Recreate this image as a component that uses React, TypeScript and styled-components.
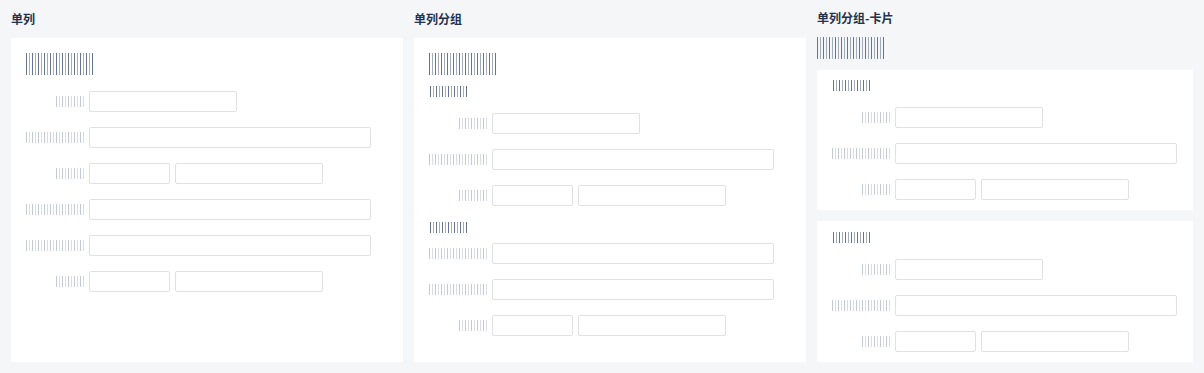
import React from "react";
import styled, { createGlobalStyle } from "styled-components";

type FieldKind = "short" | "wide" | "pair";

interface IRow {
  label: "short" | "long";
  field: FieldKind;
}

const GlobalStyle = createGlobalStyle`
  html, body {
    margin: 0;
    padding: 0;
    background: #f5f6f8;
  }
  body {
    font-family: "Noto Sans CJK SC", "Noto Sans", sans-serif;
  }
`;

const groupA: IRow[] = [
  { label: "short", field: "short" },
  { label: "long", field: "wide" },
  { label: "short", field: "pair" },
];

const singleRows: IRow[] = [
  { label: "short", field: "short" },
  { label: "long", field: "wide" },
  { label: "short", field: "pair" },
  { label: "long", field: "wide" },
  { label: "long", field: "wide" },
  { label: "short", field: "pair" },
];

const groupB: IRow[] = [
  { label: "long", field: "wide" },
  { label: "long", field: "wide" },
  { label: "short", field: "pair" },
];

const FormRows = ({ rows }: { rows: IRow[] }) => (
  <RowList>
    {rows.map((row, i) => (
      <Row key={i}>
        <LabelCell>
          <LabelBars size={row.label} />
        </LabelCell>
        {row.field === "pair" ? (
          <>
            <Input width={81} />
            <Input width={148} />
          </>
        ) : (
          <Input width={row.field === "wide" ? 282 : 148} />
        )}
      </Row>
    ))}
  </RowList>
);

export default function App() {
  return (
    <>
      <GlobalStyle />
      <Page>
        <Column>
          <Heading>单列</Heading>
          <Panel>
            <TitleBars />
            <FormRows rows={singleRows} />
          </Panel>
        </Column>

        <Column>
          <Heading>单列分组</Heading>
          <Panel>
            <TitleBars />
            <SubTitleBars top={11} bottom={16} />
            <FormRows rows={groupA} />
            <SubTitleBars top={16} bottom={10} />
            <FormRows rows={groupB} />
          </Panel>
        </Column>

        <Column>
          <Heading short>单列分组-卡片</Heading>
          <TitleBars />
          <CardStack>
            <Card>
              <SubTitleBars top={0} bottom={16} />
              <FormRows rows={groupA} />
            </Card>
            <Card>
              <SubTitleBars top={1} bottom={16} />
              <FormRows rows={groupA} />
            </Card>
          </CardStack>
        </Column>
      </Page>
    </>
  );
}

const Page = styled.div`
  box-sizing: border-box;
  height: 373px;
  padding: 0 11px 11px;
  display: grid;
  grid-template-columns: 392px 392px 376px;
  column-gap: 11px;
`;

const Column = styled.div`
  display: flex;
  flex-direction: column;
  min-height: 0;
`;

const Heading = styled.div<{ short?: boolean }>`
  height: ${(p) => (p.short ? 37 : 38)}px;
  flex: none;
  display: flex;
  align-items: center;
  font-size: 12px;
  font-weight: 700;
  color: #24324d;
  line-height: 1;
  padding-bottom: 1px;
  box-sizing: border-box;
`;

const Panel = styled.div`
  flex: 1;
  background: #ffffff;
  padding: 15px;
  display: flex;
  flex-direction: column;
  align-items: flex-start;
`;

const CardStack = styled.div`
  flex: 1;
  margin-top: 11px;
  display: flex;
  flex-direction: column;
  gap: 11px;
`;

const Card = styled.div`
  background: #ffffff;
  padding: 10px 15px;
  display: flex;
  flex-direction: column;
  align-items: flex-start;
`;

// placeholder "text" drawn as thin vertical strokes, alternating tones
const darkStripes = `repeating-linear-gradient(
  90deg,
  #66758f 0 1.2px,
  transparent 1.2px 3px,
  #a1abbe 3px 4.2px,
  transparent 4.2px 6px
)`;

const lightStripes = `repeating-linear-gradient(
  90deg,
  #c4c9d6 0 1.2px,
  transparent 1.2px 3px,
  #dadde6 3px 4.2px,
  transparent 4.2px 6px
)`;

const TitleBars = styled.div`
  flex: none;
  width: 69px;
  height: 22px;
  background: ${darkStripes};
`;

const SubTitleBars = styled.div<{ top: number; bottom: number }>`
  flex: none;
  width: 37px;
  height: 11px;
  margin: ${(p) => p.top}px 0 ${(p) => p.bottom}px 1px;
  background: ${darkStripes};
`;

const RowList = styled.div`
  display: flex;
  flex-direction: column;
  gap: 15px;
  ${TitleBars} + & {
    margin-top: 16px;
  }
`;

const Row = styled.div`
  display: flex;
  align-items: center;
  gap: 5px;
  height: 21px;
`;

const LabelCell = styled.div`
  width: 58px;
  display: flex;
  justify-content: flex-end;
`;

const LabelBars = styled.div<{ size: "short" | "long" }>`
  width: ${(p) => (p.size === "long" ? 58 : 28)}px;
  height: 11px;
  background: ${lightStripes};
`;

const Input = styled.div<{ width: number }>`
  box-sizing: border-box;
  width: ${(p) => p.width}px;
  height: 21px;
  border: 1px solid #dfe1e7;
  border-radius: 2px;
  background: #ffffff;
`;
